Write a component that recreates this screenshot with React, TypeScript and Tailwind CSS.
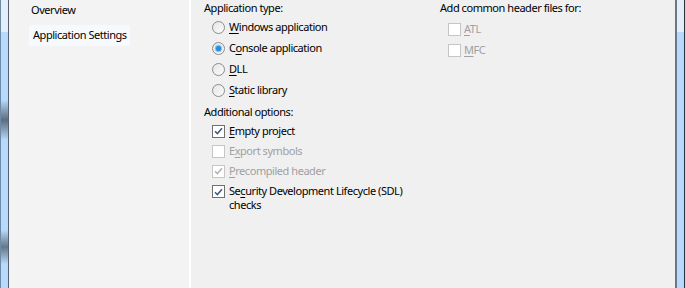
import React from 'react';

const font = { fontFamily: '"Noto Sans", "Open Sans", sans-serif' };

interface IRadioProps {
  checked?: boolean;
  children: React.ReactNode;
}
const Radio: React.FC<IRadioProps> = ({ checked, children }) => {
  return (
    <div className="flex items-center h-[21px] pl-[8px]">
      <span className="w-[13px] h-[13px] rounded-full border border-[#8c8c8c] bg-gradient-to-br from-[#e6e6e6] to-[#fbfbfb] flex items-center justify-center">
        {checked && <span className="w-[5px] h-[5px] rounded-full bg-[#1e8fe6] shadow-[0_0_1px_1px_#6bb5ef]" />}
      </span>
      <span className="ml-[4px] text-[#000]">{children}</span>
    </div>
  );
};

interface ICheckProps {
  checked?: boolean;
  disabled?: boolean;
  children: React.ReactNode;
  tall?: boolean;
}
const Check: React.FC<ICheckProps> = ({ checked, disabled, children, tall }) => {
  return (
    <div className={tall ? 'flex items-start pt-[3px] pl-[8px]' : 'flex items-center h-[20px] pl-[8px]'}>
      <span
        className={
          'w-[13px] h-[13px] shrink-0 flex items-center justify-center bg-white border ' +
          (disabled ? 'border-[#c6c6c6]' : 'border-[#707070]') +
          (tall ? ' mt-[1px]' : '')
        }
      >
        {checked && (
          <svg width="9" height="8" viewBox="0 0 9 8">
            <path
              d="M1 4.2 L3.4 6.6 L8 1.2"
              fill="none"
              stroke={disabled ? '#b2b2b2' : '#3c5a86'}
              strokeWidth="1.5"
            />
          </svg>
        )}
      </span>
      <span className={'ml-[4px] leading-[14px] ' + (disabled ? 'text-[#a0a0a0]' : 'text-black')}>{children}</span>
    </div>
  );
};

const U: React.FC<{ children: React.ReactNode }> = ({ children }) => <span className="underline underline-offset-2">{children}</span>;

const App: React.FC = () => {
  return (
    <div className="w-[685px] h-[288px] flex text-[11px] tracking-[-0.45px] overflow-hidden" style={font}>
      {/* left window frame */}
      <div className="w-[9px] h-full flex flex-col border-l border-[#6f8aa6] border-r border-r-[#55606c]">
        <div className="h-[32px] bg-[#e4eefb]" />
        <div className="h-[68px] bg-[#b7d9fb]" />
        <div className="h-[40px] bg-gradient-to-b from-[#b7d9fb] via-[#5c6d80] to-[#b7d9fb]" />
        <div className="h-[90px] bg-[#b7d9fb]" />
        <div className="h-[34px] bg-gradient-to-b from-[#b7d9fb] via-[#66788b] to-[#b7d9fb]" />
        <div className="flex-1 bg-[#b7d9fb]" />
      </div>

      {/* navigation */}
      <div className="w-[182px] h-full bg-[#f3f3f3] border-r-2 border-white pl-[20px] whitespace-nowrap">
        <div className="h-[21px] flex items-center pl-[2px] pb-[1px]">Overview</div>
        <div className="mt-[4px] h-[21px] w-[101px] bg-[#f6f9fd] flex items-center pl-[4px]">Application Settings</div>
      </div>

      {/* content */}
      <div className="flex-1 h-full bg-[#f0f0f0] flex pl-[13px] whitespace-nowrap">
        <div className="w-[236px] flex flex-col">
          <div className="h-[17px] flex items-center">Application type:</div>
          <Radio><U>W</U>indows application</Radio>
          <Radio checked>C<U>o</U>nsole application</Radio>
          <Radio><U>D</U>LL</Radio>
          <Radio><U>S</U>tatic library</Radio>
          <div className="mt-[2px] h-[18px] flex items-center">Additional options:</div>
          <Check checked><U>E</U>mpty project</Check>
          <Check disabled>E<U>x</U>port symbols</Check>
          <Check checked disabled><U>P</U>recompiled header</Check>
          <Check checked tall>
            Se<U>c</U>urity Development Lifecycle (SDL)
            <br />
            checks
          </Check>
        </div>
        <div className="flex flex-col">
          <div className="h-[17px] flex items-center">Add common header files for:</div>
          <div className="h-[22px] flex items-center pl-[8px] mt-[1px]">
            <span className="w-[13px] h-[13px] bg-white border border-[#c6c6c6]" />
            <span className="ml-[3px] text-[#a0a0a0]"><U>A</U>TL</span>
          </div>
          <div className="h-[21px] flex items-center pl-[8px]">
            <span className="w-[13px] h-[13px] bg-white border border-[#c6c6c6]" />
            <span className="ml-[3px] text-[#a0a0a0]"><U>M</U>FC</span>
          </div>
        </div>
      </div>

      {/* right window frame */}
      <div className="w-[10px] h-full flex flex-col border-l-2 border-[#6a7787] border-r border-r-[#28323c]">
        <div className="h-[32px] bg-[#e4eefb]" />
        <div className="flex-1 bg-[#b7d9fb]" />
      </div>
    </div>
  );
};

export default App;
